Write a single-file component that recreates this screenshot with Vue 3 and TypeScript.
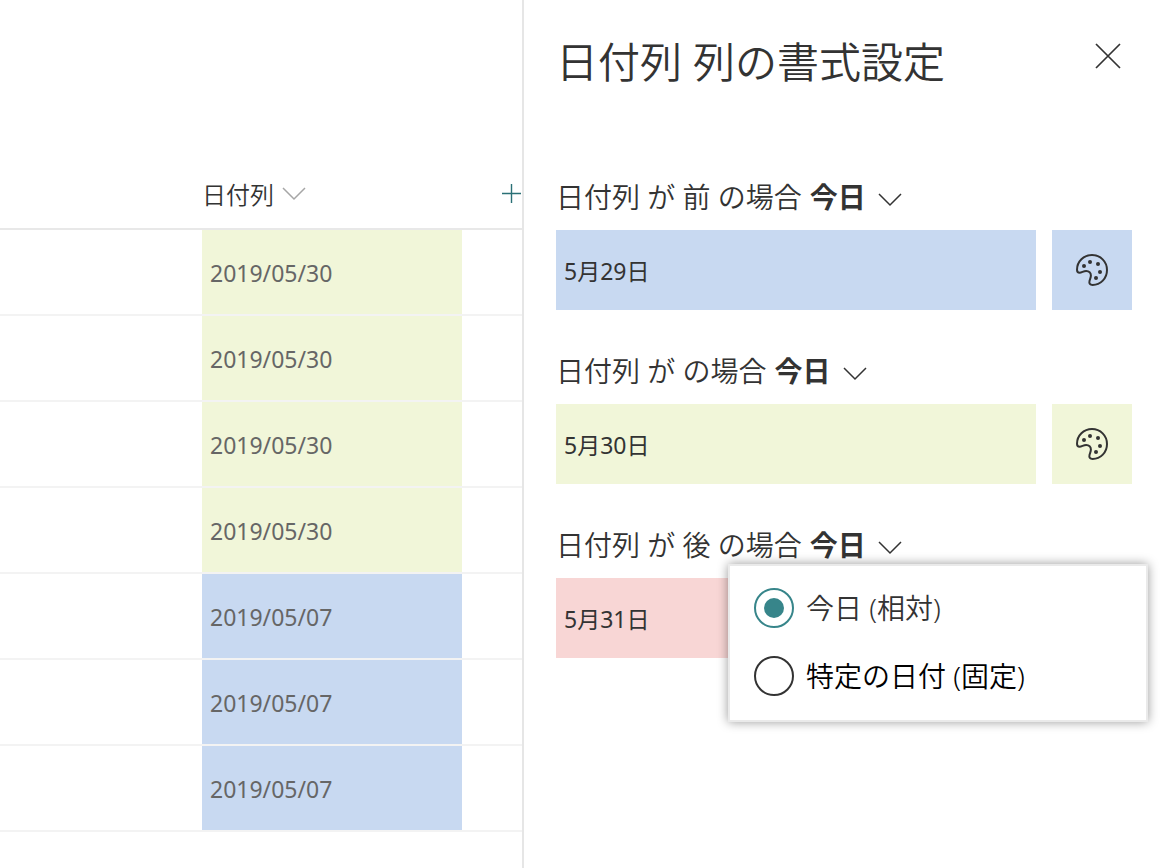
<script setup lang="ts">
import { ref } from 'vue'

type Tone = 'blue' | 'green' | 'red'

interface Row {
  id: number
  date: string
  tone: Tone
}

interface Rule {
  id: number
  condition: string
  sample: string
  tone: Tone
}

const rows: Row[] = [
  { id: 1, date: '2019/05/30', tone: 'green' },
  { id: 2, date: '2019/05/30', tone: 'green' },
  { id: 3, date: '2019/05/30', tone: 'green' },
  { id: 4, date: '2019/05/30', tone: 'green' },
  { id: 5, date: '2019/05/07', tone: 'blue' },
  { id: 6, date: '2019/05/07', tone: 'blue' },
  { id: 7, date: '2019/05/07', tone: 'blue' },
]

const rules: Rule[] = [
  { id: 1, condition: '日付列 が 前 の場合', sample: '5月29日', tone: 'blue' },
  { id: 2, condition: '日付列 が の場合', sample: '5月30日', tone: 'green' },
  { id: 3, condition: '日付列 が 後 の場合', sample: '5月31日', tone: 'red' },
]

const options = [
  { value: 'relative', label: '今日 (相対)' },
  { value: 'fixed', label: '特定の日付 (固定)' },
]

const openRule = ref<number | null>(3)
const mode = ref('relative')

function toggle(id: number) {
  openRule.value = openRule.value === id ? null : id
}
</script>

<template>
  <div class="page">
    <main class="list">
      <table class="grid">
        <colgroup>
          <col class="col-lead" />
          <col class="col-date" />
          <col />
        </colgroup>
        <thead>
          <tr>
            <th></th>
            <th scope="col">
              <button type="button" class="column-button">
                <span>日付列</span>
                <svg class="chevron" viewBox="0 0 24 14" aria-hidden="true">
                  <path d="M1 1l11 11L23 1" />
                </svg>
              </button>
            </th>
            <th class="add-cell">
              <button type="button" class="add-button" aria-label="列の追加">
                <svg viewBox="0 0 20 20" aria-hidden="true">
                  <path d="M9.500 0v19M0 9.500h19" />
                </svg>
              </button>
            </th>
          </tr>
        </thead>
        <tbody>
          <tr v-for="row in rows" :key="row.id">
            <td></td>
            <td :class="row.tone">{{ row.date }}</td>
            <td></td>
          </tr>
        </tbody>
      </table>
    </main>

    <aside class="panel">
      <header class="panel-head">
        <h1>日付列 列の書式設定</h1>
        <button type="button" class="close" aria-label="閉じる">
          <svg viewBox="0 0 24 24" aria-hidden="true">
            <path d="M0 0l24 24M24 0L0 24" />
          </svg>
        </button>
      </header>

      <section v-for="rule in rules" :key="rule.id" class="rule">
        <div class="rule-title">
          <span>{{ rule.condition }}</span>
          <button
            type="button"
            class="value-button"
            :aria-expanded="openRule === rule.id"
            @click="toggle(rule.id)"
          >
            <b>今日</b>
            <svg class="chevron" viewBox="0 0 24 14" aria-hidden="true">
              <path d="M1 0l11 11L23 0" />
            </svg>
          </button>
        </div>
        <div class="rule-body">
          <div class="sample" :class="rule.tone">{{ rule.sample }}</div>
          <button type="button" class="style-button" :class="rule.tone" aria-label="スタイルの編集">
            <svg viewBox="0 0 32 32" aria-hidden="true">
              <path
                class="outline"
                d="M16 1C24.400 1 31 7.600 31 16s-6.400 15-14.400 15c-2.600 0-3.700-1.500-3.100-3.900.5-2 1.400-3.700 1.400-5.600 0-2.600-1.900-4.500-4.700-4.500-2.900 0-4.300 1.700-6.600 1.700C1.800 18.700 1 17.500 1 15.700 1 7.500 7.700 1 16 1z"
              />
              <circle cx="8" cy="12" r="2" />
              <circle cx="14" cy="8" r="2" />
              <circle cx="22" cy="10" r="2" />
              <circle cx="24" cy="18" r="2" />
              <circle cx="20" cy="24" r="2" />
            </svg>
          </button>
        </div>

        <div v-if="openRule === rule.id" class="callout" role="radiogroup" aria-label="日付の種類">
          <label v-for="option in options" :key="option.value" class="option">
            <input v-model="mode" type="radio" name="date-mode" :value="option.value" />
            <span>{{ option.label }}</span>
          </label>
        </div>
      </section>
    </aside>
  </div>
</template>

<style>
body {
  margin: 0;
  background: #fff;
}
</style>

<style scoped>
.page {
  display: grid;
  grid-template-columns: minmax(0, 524fr) minmax(0, 636fr);
  min-height: 100vh;
  color: #333;
  font-family: "Noto Sans", "Noto Sans CJK JP", sans-serif;
  font-weight: 350;
}

button {
  display: flex;
  align-items: center;
  padding: 0;
  border: 0;
  background: none;
  color: inherit;
  font: inherit;
  cursor: pointer;
}

svg {
  display: block;
  flex: none;
  overflow: visible;
  fill: none;
  stroke: currentColor;
}

.list {
  padding-top: 160px;
  border-right: 2px solid #e6e6e6;
}

.grid {
  width: 100%;
  table-layout: fixed;
  border-spacing: 0;
}

.col-lead {
  width: 202px;
}

.col-date {
  width: 260px;
}

.grid th {
  height: 68px;
  padding: 0;
  border-bottom: 2px solid #e8e8e8;
  font-size: 24px;
  font-weight: inherit;
}

.grid td {
  height: 82px;
  padding: 2px 8px 0;
  border-bottom: 2px solid #f3f3f3;
  color: #666;
  font-size: 23px;
  font-weight: 400;
  line-height: 32px;
}

.column-button {
  gap: 8px;
}

.column-button span {
  padding-bottom: 2px;
}

.column-button .chevron {
  color: #a6a6a6;
}

.chevron {
  width: 24px;
  height: 14px;
  stroke-width: 1.5;
}

.add-button {
  margin-left: auto;
  color: #2a7076;
}

.add-button svg {
  width: 20px;
  height: 20px;
  stroke-width: 1.4;
}

.blue {
  background: #c8d9f1;
}

.green {
  background: #f1f6d9;
}

.red {
  background: #f8d6d5;
}

.panel {
  padding: 32px 28px 32px 32px;
}

.panel-head {
  display: flex;
  align-items: flex-start;
  justify-content: space-between;
  height: 132px;
}

.panel-head h1 {
  margin: 0;
  font-size: 42px;
  font-weight: inherit;
  line-height: 60px;
}

.close {
  padding: 12px;
}

.close svg {
  width: 24px;
  height: 24px;
  stroke-width: 1.7;
}

.rule {
  position: relative;
  margin-bottom: 28px;
}

.rule-title {
  display: flex;
  align-items: baseline;
  gap: 8px;
  height: 66px;
  font-size: 28px;
  line-height: 66px;
  white-space: nowrap;
}

.value-button {
  align-items: baseline;
  gap: 12px;
}

.value-button b {
  font-weight: 700;
}

.rule-body {
  display: flex;
  gap: 16px;
}

.sample {
  flex: 1;
  padding: 2px 8px 0;
  font-size: 23px;
  font-weight: 400;
  line-height: 78px;
}

.style-button {
  justify-content: center;
  width: 80px;
  height: 80px;
}

.style-button svg {
  width: 32px;
  height: 32px;
  fill: currentColor;
  stroke: none;
}

.style-button .outline {
  fill: none;
  stroke: currentColor;
  stroke-width: 2;
}

.callout {
  position: absolute;
  top: 52px;
  right: -16px;
  display: flex;
  flex-direction: column;
  gap: 28px;
  box-sizing: border-box;
  width: 420px;
  padding: 22px 24px 24px;
  border: 2px solid #eaeaea;
  background: #fff;
  box-shadow: 0 0 10px rgba(0, 0, 0, 0.4);
}

.option {
  display: flex;
  align-items: center;
  gap: 12px;
  height: 40px;
  font-size: 28px;
  cursor: pointer;
}

.option span {
  padding-bottom: 2px;
}

.option + .option {
  color: #000;
}

.option input {
  display: grid;
  place-content: center;
  flex: none;
  width: 40px;
  height: 40px;
  margin: 0;
  border: 2px solid #333;
  border-radius: 50%;
  appearance: none;
}

.option input:checked {
  border-color: #37858a;
}

.option input:checked::before {
  width: 20px;
  height: 20px;
  border-radius: 50%;
  background: #37858a;
  content: "";
}
</style>
